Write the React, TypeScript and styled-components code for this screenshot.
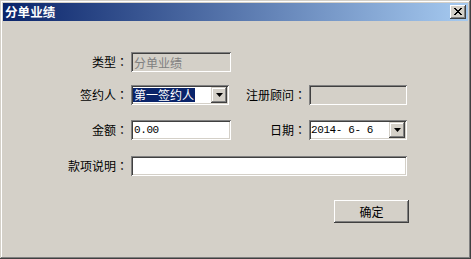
import styled, { createGlobalStyle } from "styled-components";

const palette = {
  face: "#D4D0C8",
  shadow: "#808080",
  dark: "#404040",
  light: "#FFFFFF",
  navy: "#0A246A",
  sky: "#A6CAF0",
  disabledText: "#808080",
};

const GlobalStyle = createGlobalStyle`
  html, body {
    margin: 0;
    padding: 0;
    background: ${palette.face};
  }
  body {
    font-family: "Noto Sans CJK SC", "Noto Sans", sans-serif;
    font-size: 12px;
  }
`;

const Window = styled.div`
  box-sizing: border-box;
  width: 471px;
  height: 259px;
  padding: 3px;
  background: ${palette.face};
  box-shadow: inset -1px -1px 0 ${palette.dark}, inset 1px 1px 0 ${palette.face},
    inset -2px -2px 0 ${palette.shadow}, inset 2px 2px 0 ${palette.light};
  display: flex;
  flex-direction: column;
`;

const TitleBar = styled.div`
  height: 18px;
  padding: 0 2px;
  display: flex;
  align-items: center;
  justify-content: space-between;
  background: linear-gradient(to right, ${palette.navy}, ${palette.sky});
`;

const Title = styled.div`
  color: white;
  font-weight: 700;
  font-size: 12.5px;
  line-height: 18px;
  letter-spacing: 0.1px;
`;

const CloseButton = styled.div`
  box-sizing: border-box;
  width: 16px;
  height: 14px;
  background: ${palette.face};
  box-shadow: inset -1px -1px 0 ${palette.dark}, inset 1px 1px 0 ${palette.light},
    inset -2px -2px 0 ${palette.shadow};
  display: flex;
  align-items: center;
  justify-content: center;
  padding-bottom: 1px;
`;

const Body = styled.div`
  padding-top: 31px;
  display: flex;
  flex-direction: column;
`;

const Row = styled.div<{ $gap: number }>`
  margin-top: ${(p) => p.$gap}px;
  height: 20px;
  display: grid;
  grid-template-columns: 125px 100px 72px 98px;
  column-gap: 3px;
  align-items: center;
`;

// TC locale centres the full-width colon, as the old dialog font does
const Label = styled.div`
  font-family: "Noto Sans CJK TC", "Noto Sans CJK SC", sans-serif;
  text-align: right;
  color: black;
  font-size: 12px;
  line-height: 20px;
  white-space: nowrap;
`;

const Sunken = styled.div<{ $disabled?: boolean; $span?: number; $width?: number }>`
  box-sizing: border-box;
  height: 20px;
  width: ${(p) => (p.$width ? `${p.$width}px` : "100%")};
  grid-column: ${(p) => (p.$span ? `span ${p.$span}` : "auto")};
  background: ${(p) => (p.$disabled ? palette.face : palette.light)};
  box-shadow: inset 1px 1px 0 ${palette.shadow}, inset -1px -1px 0 ${palette.light},
    inset 2px 2px 0 ${palette.dark}, inset -2px -2px 0 ${palette.face};
  padding: 0 3px;
  display: flex;
  align-items: center;
  color: ${(p) => (p.$disabled ? palette.disabledText : "black")};
  font-size: 12px;
  white-space: nowrap;
  overflow: hidden;
`;

const NumberText = styled.span`
  font-family: "Liberation Mono", monospace;
  font-size: 11px;
  letter-spacing: -0.4px;
`;

const Combo = styled(Sunken)`
  padding: 0 2px 0 2px;
  justify-content: space-between;
`;

const Selected = styled.span`
  background: ${palette.navy};
  color: white;
  line-height: 14px;
  padding: 0 1px;
`;

const ArrowButton = styled.div`
  box-sizing: border-box;
  width: 16px;
  height: 16px;
  background: ${palette.face};
  box-shadow: inset -1px -1px 0 ${palette.dark}, inset 1px 1px 0 ${palette.face},
    inset -2px -2px 0 ${palette.shadow}, inset 2px 2px 0 ${palette.light};
  display: flex;
  align-items: center;
  justify-content: center;
`;

const Footer = styled.div`
  margin-top: 24px;
  padding-right: 59px;
  display: flex;
  justify-content: flex-end;
`;

const Button = styled.div`
  box-sizing: border-box;
  width: 75px;
  height: 23px;
  background: ${palette.face};
  box-shadow: inset -1px -1px 0 ${palette.dark}, inset 1px 1px 0 ${palette.light},
    inset -2px -2px 0 ${palette.shadow};
  display: flex;
  align-items: center;
  justify-content: center;
  font-size: 12px;
  color: black;
  padding-bottom: 1px;
`;

const Arrow = () => (
  <svg width="7" height="4" viewBox="0 0 7 4">
    <path d="M0 0h7L3.5 4z" fill="black" />
  </svg>
);

const CloseIcon = () => (
  <svg width="8" height="7" viewBox="0 0 8 7" shapeRendering="crispEdges">
    <path
      d="M0 0h2v1h1v1h2V1h1V0h2v1h-1v1h-1v1h-1v1h1v1h1v1h1v1H6V6H5V5H3v1H2v1H0V6h1V5h1V4h1V3H2V2H1V1H0z"
      fill="black"
    />
  </svg>
);

export default function App() {
  return (
    <>
      <GlobalStyle />
      <Window>
        <TitleBar>
          <Title>分单业绩</Title>
          <CloseButton>
            <CloseIcon />
          </CloseButton>
        </TitleBar>
        <Body>
          <Row $gap={0}>
            <Label>类型：</Label>
            <Sunken $disabled>分单业绩</Sunken>
          </Row>
          <Row $gap={13}>
            <Label>签约人：</Label>
            <Combo $width={98}>
              <Selected>第一签约人</Selected>
              <ArrowButton>
                <Arrow />
              </ArrowButton>
            </Combo>
            <Label>注册顾问：</Label>
            <Sunken $disabled />
          </Row>
          <Row $gap={15}>
            <Label>金额：</Label>
            <Sunken>
              <NumberText>0.00</NumberText>
            </Sunken>
            <Label>日期：</Label>
            <Combo>
              <NumberText>2014- 6- 6</NumberText>
              <ArrowButton>
                <Arrow />
              </ArrowButton>
            </Combo>
          </Row>
          <Row $gap={16}>
            <Label>款项说明：</Label>
            <Sunken $span={3} />
          </Row>
          <Footer>
            <Button>确定</Button>
          </Footer>
        </Body>
      </Window>
    </>
  );
}
